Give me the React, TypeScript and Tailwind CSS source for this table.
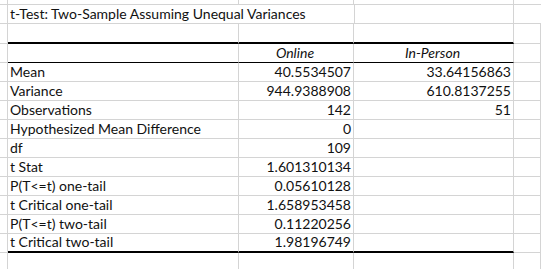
const rows: [string, string, string][] = [
  ["Mean", "40.5534507", "33.64156863"],
  ["Variance", "944.9388908", "610.8137255"],
  ["Observations", "142", "51"],
  ["Hypothesized Mean Difference", "0", ""],
  ["df", "109", ""],
  ["t Stat", "1.601310134", ""],
  ["P(T<=t) one-tail", "0.05610128", ""],
  ["t Critical one-tail", "1.658953458", ""],
  ["P(T<=t) two-tail", "0.11220256", ""],
  ["t Critical two-tail", "1.98196749", ""],
];

const grid = "border-[#d4d4d4]";

function Row({
  h,
  a,
  b,
  c,
  bottom = "gray",
  italic = false,
  centerHead = false,
}: {
  h: string;
  a?: string;
  b?: string;
  c?: string;
  bottom?: "gray" | "thin" | "thick";
  italic?: boolean;
  centerHead?: boolean;
}) {
  const mid =
    bottom === "thick"
      ? "border-b-2 border-b-black"
      : bottom === "thin"
        ? "border-b border-b-black"
        : "border-b border-b-[#d4d4d4]";
  const align = centerHead ? "justify-center" : "justify-end";
  return (
    <div className={`flex ${h}`}>
      <div className={`w-[8px] shrink-0 border-r border-b ${grid}`} />
      <div
        className={`w-[231px] shrink-0 flex items-end pl-[2px] pb-[1px] border-r border-r-[#d4d4d4] ${mid} whitespace-nowrap`}
      >
        {a}
      </div>
      <div
        className={`w-[115px] shrink-0 flex items-end ${align} pr-[2px] pb-[1px] border-r border-r-[#d4d4d4] ${mid} ${italic ? "italic" : ""}`}
      >
        {b}
      </div>
      <div
        className={`w-[160px] shrink-0 flex items-end ${align} pr-[2px] pb-[1px] border-r border-r-[#d4d4d4] ${mid} ${italic ? "italic" : ""}`}
      >
        {c}
      </div>
      <div className={`flex-1 border-r border-b ${grid}`} />
    </div>
  );
}

export default function App() {
  return (
    <div className="w-[541px] h-[269px] overflow-hidden bg-white text-[#111] text-[14px] leading-[17px] font-['Lato','Open_Sans',sans-serif]">
      <div className="flex h-[5px]">
        <div className={`w-[8px] shrink-0 border-r border-b ${grid}`} />
        <div className={`w-[231px] shrink-0 border-r border-b ${grid}`} />
        <div className={`w-[115px] shrink-0 border-r border-b ${grid}`} />
        <div className={`w-[160px] shrink-0 border-r border-b ${grid}`} />
        <div className={`flex-1 border-b ${grid}`} />
      </div>
      <div className="flex h-[19px]">
        <div className={`w-[8px] shrink-0 border-r border-b ${grid}`} />
        <div
          className={`w-[346px] shrink-0 flex items-end pl-[2px] pb-[1px] border-b ${grid} whitespace-nowrap`}
        >
          t-Test: Two-Sample Assuming Unequal Variances
        </div>
        <div className={`w-[160px] shrink-0 border-l border-r border-b ${grid}`} />
        <div className={`flex-1 border-b ${grid}`} />
      </div>
      <Row h="h-[20px]" bottom="thick" />
      <Row h="h-[19px]" bottom="thin" b="Online" c="In-Person" italic centerHead />
      {rows.map((r, i) => (
        <Row
          key={r[0]}
          h="h-[19px]"
          a={r[0]}
          b={r[1]}
          c={r[2]}
          bottom={i === rows.length - 1 ? "thick" : "gray"}
        />
      ))}
      <Row h="h-[19px]" />
    </div>
  );
}
